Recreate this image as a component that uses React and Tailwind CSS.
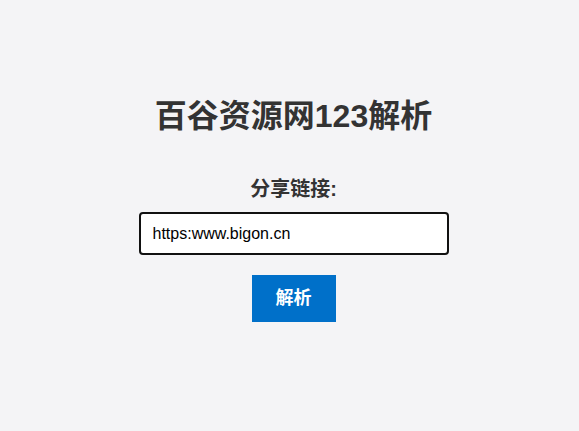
export default function App() {
  return (
    <div
      className="min-h-screen bg-[#f4f4f6] text-[#333] flex flex-col items-center pt-[92px] pl-2"
      style={{ fontFamily: '"Liberation Sans", "Noto Sans CJK SC", sans-serif' }}
    >
      <h1 className="text-[32px] font-bold leading-[48px]">百谷资源网123解析</h1>
      <label className="mt-[37px] text-[20px] font-bold leading-[24px]">分享链接:</label>
      <input
        type="text"
        defaultValue="https:www.bigon.cn"
        className="mt-[11px] w-[310px] h-[43px] px-3 text-[16px] text-black bg-white border-2 border-[#111] rounded-[4px] outline-none"
      />
      <button className="mt-[20px] w-[84px] h-[47px] bg-[#0070c9] text-white text-[18px] font-bold">
        解析
      </button>
    </div>
  );
}
